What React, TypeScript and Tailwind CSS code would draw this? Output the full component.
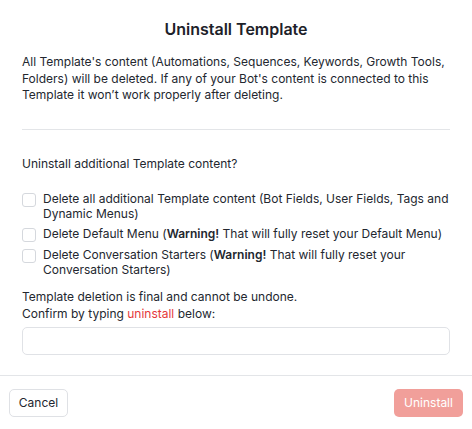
import React from "react"

const items = [
  <>Delete all additional Template content (Bot Fields, User Fields, Tags and Dynamic Menus)</>,
  <>
    Delete Default Menu (<b className="font-semibold">Warning!</b> That will fully reset your Default Menu)
  </>,
  <>
    Delete Conversation Starters (<b className="font-semibold">Warning!</b> That will fully reset your
    Conversation Starters)
  </>,
]

export default function App() {
  return (
    <div
      className="w-[472px] h-[429px] bg-white text-[#23272f] flex flex-col overflow-hidden"
      style={{ fontFamily: "Inter, 'Noto Sans', sans-serif" }}
    >
      <div className="px-[22px] flex-1">
        <h2 className="pt-[19px] text-center text-[16px] leading-5 font-semibold text-[#1d2129]">
          Uninstall Template
        </h2>
        <p className="mt-[15px] text-[12px] leading-[16.5px]">
          All Template's content (Automations, Sequences, Keywords, Growth Tools, Folders) will be deleted. If any of
          your Bot's content is connected to this Template it won’t work properly after deleting.
        </p>
        <div className="mt-[25px] h-px bg-[#e3e5e8]" />
        <p className="mt-[26px] text-[12px] leading-[16.5px]">Uninstall additional Template content?</p>
        <div className="mt-[20px] flex flex-col gap-[6px]">
          {items.map((content, i) => (
            <label key={i} className="flex items-start gap-[7px] text-[12px] leading-[14.6px]">
              <span className="mt-[1px] w-[14px] h-[14px] shrink-0 rounded-[3px] border border-[#d5d8dd] bg-white" />
              <span>{content}</span>
            </label>
          ))}
        </div>
        <p className="mt-[12px] text-[12px] leading-[16.5px]">
          Template deletion is final and cannot be undone.
          <br />
          Confirm by typing <span className="text-[#e5383b]">uninstall</span> below:
        </p>
        <input
          className="mt-[5px] block w-full h-[28px] rounded-[5px] border border-[#e0e2e6] px-2 text-[12px] outline-none"
          type="text"
        />
      </div>
      <div className="h-px bg-[#e3e5e8]" />
      <div className="flex justify-between px-[9px] pt-[13px] pb-[12px]">
        <button className="h-[28px] w-[59px] rounded-[5px] border border-[#dfe1e5] bg-white text-[12px] text-[#23272f]">
          Cancel
        </button>
        <button className="h-[28px] w-[69px] rounded-[5px] bg-[#f19f9a] text-[12px] text-white">Uninstall</button>
      </div>
    </div>
  )
}
